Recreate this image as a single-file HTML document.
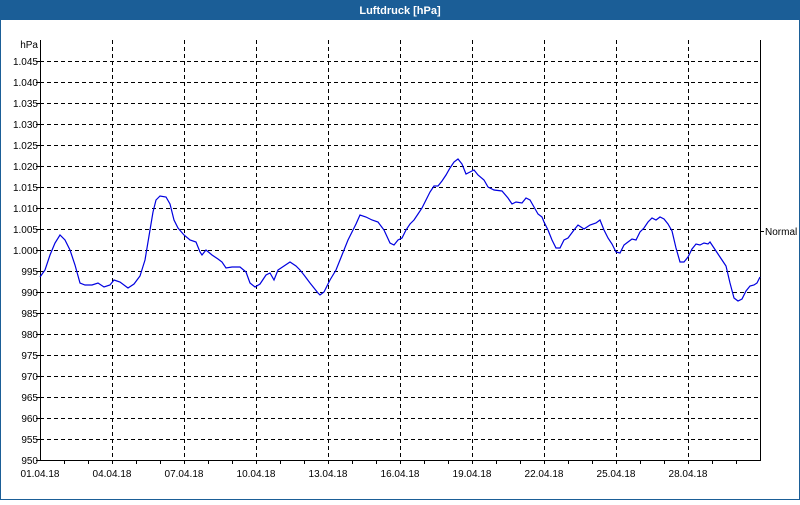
<!DOCTYPE html>
<html><head><meta charset="utf-8"><style>
html,body{margin:0;padding:0;background:#fff;}
body{width:800px;height:500px;overflow:hidden;font-family:"Liberation Sans",sans-serif;}
</style></head><body>
<svg width="800" height="500" xmlns="http://www.w3.org/2000/svg" font-family="Liberation Sans, sans-serif" font-size="10">
<rect x="0" y="0" width="800" height="500" fill="#fff"/>
<rect x="0" y="0" width="800" height="20" fill="#1b5e97"/>
<rect x="0" y="20" width="1" height="480" fill="#1b5e97"/>
<rect x="799" y="20" width="1" height="480" fill="#1b5e97"/>
<rect x="0" y="499" width="800" height="1" fill="#1b5e97"/>
<text x="400" y="14" fill="#fff" font-weight="bold" font-size="11" text-anchor="middle">Luftdruck [hPa]</text>
<g stroke="#000" stroke-width="1" stroke-dasharray="4,3" shape-rendering="crispEdges">
<path d="M40 61.5H760M40 82.5H760M40 103.5H760M40 124.5H760M40 145.5H760M40 166.5H760M40 187.5H760M40 208.5H760M40 229.5H760M40 250.5H760M40 271.5H760M40 292.5H760M40 313.5H760M40 334.5H760M40 355.5H760M40 376.5H760M40 397.5H760M40 418.5H760M40 439.5H760"/>
<path d="M112.5 40V460M184.5 40V460M256.5 40V460M328.5 40V460M400.5 40V460M472.5 40V460M544.5 40V460M616.5 40V460M688.5 40V460"/>
</g>
<g stroke="#000" stroke-width="1" shape-rendering="crispEdges" fill="none">
<path d="M40.5 40V460.5H760.5V40"/>
<path d="M64.5 460v4M88.5 460v4M112.5 460v4M136.5 460v4M160.5 460v4M184.5 460v4M208.5 460v4M232.5 460v4M256.5 460v4M280.5 460v4M304.5 460v4M328.5 460v4M352.5 460v4M376.5 460v4M400.5 460v4M424.5 460v4M448.5 460v4M472.5 460v4M496.5 460v4M520.5 460v4M544.5 460v4M568.5 460v4M592.5 460v4M616.5 460v4M640.5 460v4M664.5 460v4M688.5 460v4M712.5 460v4M736.5 460v4"/>
<path d="M36 61.5h4M36 82.5h4M36 103.5h4M36 124.5h4M36 145.5h4M36 166.5h4M36 187.5h4M36 208.5h4M36 229.5h4M36 250.5h4M36 271.5h4M36 292.5h4M36 313.5h4M36 334.5h4M36 355.5h4M36 376.5h4M36 397.5h4M36 418.5h4M36 439.5h4M36 460.5h4"/>
<path d="M760 231.5h4"/>
</g>
<g fill="#000" text-anchor="end">
<text x="38" y="48">hPa</text>
<text x="38" y="65">1.045</text><text x="38" y="86">1.040</text><text x="38" y="107">1.035</text><text x="38" y="128">1.030</text><text x="38" y="149">1.025</text><text x="38" y="170">1.020</text><text x="38" y="191">1.015</text><text x="38" y="212">1.010</text><text x="38" y="233">1.005</text><text x="38" y="254">1.000</text><text x="38" y="275">995</text><text x="38" y="296">990</text><text x="38" y="317">985</text><text x="38" y="338">980</text><text x="38" y="359">975</text><text x="38" y="380">970</text><text x="38" y="401">965</text><text x="38" y="422">960</text><text x="38" y="443">955</text><text x="38" y="464">950</text>
</g>
<text x="765" y="235" fill="#000">Normal</text>
<g fill="#000" text-anchor="middle">
<text x="40" y="477">01.04.18</text><text x="112" y="477">04.04.18</text><text x="184" y="477">07.04.18</text><text x="256" y="477">10.04.18</text><text x="328" y="477">13.04.18</text><text x="400" y="477">16.04.18</text><text x="472" y="477">19.04.18</text><text x="544" y="477">22.04.18</text><text x="616" y="477">25.04.18</text><text x="688" y="477">28.04.18</text>
</g>
<polyline fill="none" stroke="#0000e0" stroke-width="1.2" points="40,277 45,270 50,255 55,243 60,235 65,240 70,250 75,265 80,283 85,285 92,285 98,283 104,287 110,285 114,280 120,282 128,288 134,284 140,276 145,260 150,230 153,212 156,200 160,196 166,197 170,204 174,220 178,228 184,235 190,240 196,242 200,252 202,255 206,250 212,255 218,259 222,262 226,268 232,267 240,267 246,272 250,283 255,287 260,284 266,275 270,273 274,280 278,270 284,266 290,262 296,266 300,270 304,275 310,283 314,288 318,293 320,295 324,292 330,280 336,270 342,255 348,240 352,232 356,224 360,215 366,217 372,220 378,222 384,230 390,243 394,245 398,240 402,238 406,230 410,224 414,220 418,214 422,208 426,200 430,192 434,186 438,186 442,181 446,175 450,168 454,162 458,159 462,164 466,174 470,172 474,170 478,175 484,180 488,187 494,190 502,191 508,198 512,204 516,202 522,203 526,198 530,200 534,207 538,214 542,217 544,222 548,230 552,240 556,248 560,248 564,240 568,238 574,230 578,225 584,229 590,225 596,223 600,220 604,230 608,238 612,244 616,252 620,253 624,245 628,242 632,239 636,240 640,232 644,228 648,222 652,218 656,220 660,217 664,219 668,224 672,231 676,248 680,262 684,262 688,257 692,249 696,244 700,245 704,243 708,244 710,242 714,248 718,254 722,260 726,266 730,283 734,298 738,301 742,299 746,291 750,286 754,285 757,283 760,277"/>
</svg>
</body></html>
